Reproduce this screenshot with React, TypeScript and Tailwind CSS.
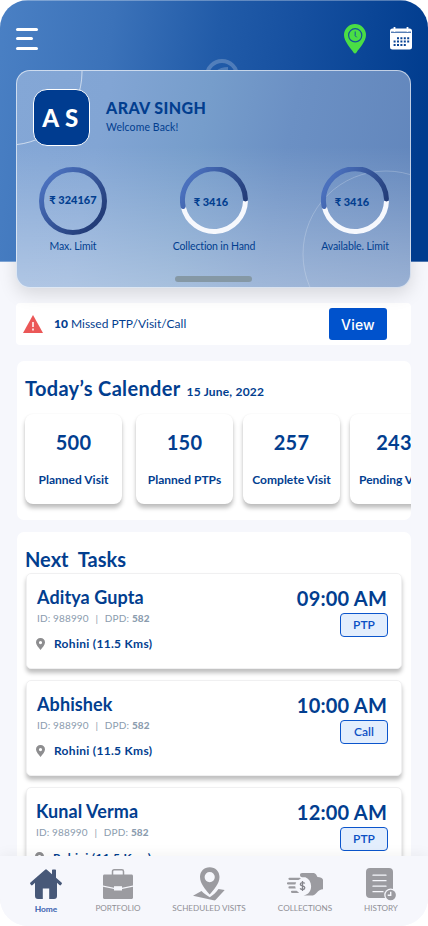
import { ReactElement } from "react";

interface RingProps {
  id: string;
  label: string;
  amount: string;
  full?: boolean;
  amountClass?: string;
  labelClass?: string;
}

interface Stat {
  value: string;
  label: string;
  className: string;
}

interface Task {
  name: string;
  nameClass: string;
  time: string;
  type: string;
}

const stats: Stat[] = [
  { value: "500", label: "Planned Visit", className: "mr-[14px]" },
  { value: "150", label: "Planned PTPs", className: "mr-[10px]" },
  { value: "257", label: "Complete Visit", className: "mr-[10px]" },
  { value: "243", label: "Pending Visit", className: "pr-[9px]" },
];

const tasks: Task[] = [
  { name: "Aditya Gupta", nameClass: "pl-[10px]", time: "09:00 AM", type: "PTP" },
  { name: "Abhishek", nameClass: "pl-[10px]", time: "10:00 AM", type: "Call" },
  { name: "Kunal Verma", nameClass: "pl-[9px]", time: "12:00 AM", type: "PTP" },
];

const Ring = ({ id, label, amount, full, amountClass, labelClass }: RingProps) => (
  <div className="flex w-[100px] flex-col items-center">
    <div className="relative h-[68px] w-[68px]">
      <svg viewBox="0 0 68 68" className="h-full w-full" fill="none">
        <defs>
          <linearGradient id={id} x1="12" y1="10" x2="58" y2="52" gradientUnits="userSpaceOnUse">
            <stop stopColor="#4a70bd" />
            <stop offset="1" stopColor="#233d79" />
          </linearGradient>
          <linearGradient id={`${id}-half`} x1="18" y1="0" x2="66" y2="30" gradientUnits="userSpaceOnUse">
            <stop stopColor="#4a70bd" />
            <stop offset="1" stopColor="#233d79" />
          </linearGradient>
        </defs>
        {full ? (
          <circle cx="34" cy="34" r="31.5" stroke={`url(#${id})`} strokeWidth="5" />
        ) : (
          <>
            <path d="M65.500 34A31.500 31.500 0 0 1 3.300 40" stroke="#f6f8fd" strokeWidth="5" />
            <path
              d="M3.100 39.500A31.500 31.500 0 1 1 65.450 32"
              stroke={`url(#${id}-half)`}
              strokeWidth="5"
              strokeLinecap="round"
            />
          </>
        )}
      </svg>
      <span
        className={`absolute inset-0 flex items-center justify-center whitespace-nowrap text-[11px] font-black ${amountClass}`}
      >
        {amount}
      </span>
    </div>
    <p className={`mt-[4px] whitespace-nowrap text-[10.5px] leading-[14px] ${labelClass}`}>{label}</p>
  </div>
);

const ClockPin = () => (
  <svg width="22" height="30" viewBox="0 0 22 30">
    <path d="M11 0a11 11 0 0 1 11 11c0 6.500-7 13.500-9.500 17.500-.9 1.300-2.100 1.300-3 0C7 24.500 0 17.500 0 11A11 11 0 0 1 11 0Z" fill="#4ade45" />
    <circle cx="11.200" cy="11.300" r="6.600" fill="none" stroke="#12549b" strokeWidth="1.200" />
    <path d="M11.200 7.500v4.200l1.500 1.600" fill="none" stroke="#12549b" strokeWidth="1" />
  </svg>
);

const CalendarIcon = () => (
  <svg width="22" height="23" viewBox="0 0 22 23">
    <path
      d="M2.500 1.500h17A2.500 2.500 0 0 1 22 4v16a2.500 2.500 0 0 1-2.500 2.500h-17A2.500 2.500 0 0 1 0 20V4a2.500 2.500 0 0 1 2.500-2.500Z"
      fill="#fff"
    />
    <path d="M1 5.200h20" stroke="#0b4494" strokeWidth="1" />
    <path d="M4.500 0v4M17.500 0v4" stroke="#fff" strokeWidth="1.800" strokeLinecap="round" />
    <g stroke="#0b4494" strokeWidth="2" strokeDasharray="2 1.400">
      <path d="M7 11.200h12.200M3.600 14.500h15.600M3.600 17.900h12.200" />
    </g>
  </svg>
);

const HomeIcon = () => (
  <svg width="32" height="30" viewBox="0 0 32 30" fill="#475878">
    <path d="M15.100.7a1.400 1.400 0 0 1 1.800 0L22 5.200V1.300c0-.5.300-.8.800-.8h2.400c.5 0 .8.300.8.800v7.400l5.500 4.800c.6.500.6 1 .2 1.500l-.8 1c-.4.500-.9.500-1.500 0L27 13.700V27a3 3 0 0 1-3 3h-4.800V19.500h-6.400V30H8a3 3 0 0 1-3-3V13.700L2.600 16c-.6.500-1.100.5-1.500 0l-.8-1c-.4-.5-.4-1 .2-1.500Z" />
  </svg>
);

const PortfolioIcon = () => (
  <svg width="30" height="30" viewBox="0 0 30 30" fill="#9b9ba0">
    <path d="M9.500 6V2.500c0-1 .6-1.700 1.600-1.700h7.800c1 0 1.600.7 1.600 1.700V6" fill="none" stroke="#9b9ba0" strokeWidth="1.500" />
    <path d="M1.500 5.500h27c.9 0 1.500.6 1.500 1.500v9.500l-11 2.300v-1.600h-8v1.600L0 16.500V7c0-.9.600-1.500 1.500-1.500Z" />
    <path d="M0 17.700 11 20v1.500h8V20l11-2.300v10.800c0 .9-.6 1.500-1.500 1.500h-27C.6 30 0 29.400 0 28.500Z" />
    <path d="M11.500 17.700h7v3.300h-7Z" fill="#f6f7fc" />
  </svg>
);

const VisitsIcon = () => (
  <svg width="32" height="34" viewBox="0 0 32 34" fill="#9b9ba0">
    <path d="M8.500 24 0 28.700l20.500 4.600c1 .2 1.600 0 2.200-.5L31.700 23l-6.200-1c-2.500 3.600-5.500 6.200-8.700 8.200-3.300-1.900-6-3.900-8.300-6.200Z" />
    <path d="M16.700.3c5.700 0 9.800 4.200 9.800 9.600 0 7.100-5.900 12.600-9.800 17.600C12.800 22.500 7 17 7 9.900 7 4.500 11 .3 16.700.3Zm0 4.700a5.100 5.100 0 1 0 0 10.200 5.100 5.100 0 0 0 0-10.200Z" fillRule="evenodd" />
  </svg>
);

const CollectionsIcon = () => (
  <svg width="36" height="23" viewBox="0 0 36 23" fill="#9b9ba0">
    <path d="M15 0h10.500c1.500 0 2.600.4 3.600 1.500L30.500 4c3 0 4.800 1 5.500 2.700v9.500c-2.500.3-4.500 1.300-6.300 3.500-1.700 2-3.200 2.800-5.700 2.800h-7.500c5-.7 7.600-4.600 7.600-9.200 0-4.200-2-7.500-5.700-9.100H15a2 2 0 0 1 0-4.200Z" />
    <path d="M2.500 5.800h10M1 10.300h7.500M2.500 14.400h6.500M5 18.800h6" fill="none" stroke="#9b9ba0" strokeWidth="2.200" strokeLinecap="round" />
    <circle cx="15.500" cy="13" r="7.300" fill="#f6f7fc" />
    <path d="M17.700 10.500c-.7-1.300-4.400-1.300-4.400.7 0 2.200 4.500 1.300 4.500 3.600 0 2.100-3.700 2.200-4.700.6M15.500 8v10" fill="none" stroke="#85858c" strokeWidth="1.300" />
  </svg>
);

const HistoryIcon = () => (
  <svg width="31" height="33" viewBox="0 0 31 33">
    <path d="M4 0h19a4 4 0 0 1 4 4v23a3 3 0 0 1-3 3H4a4 4 0 0 1-4-4V4a4 4 0 0 1 4-4Z" fill="#9b9ba0" />
    <path d="M7 7.200h13M7 12.700h13M7 18.200h13M7 23.700h10" stroke="#f6f7fc" strokeWidth="1.300" strokeLinecap="round" />
    <circle cx="24.700" cy="27" r="6.500" fill="#f6f7fc" />
    <circle cx="24.700" cy="27" r="5.200" fill="#9b9ba0" />
    <path d="M24.700 23.800v3.400h-3" fill="none" stroke="#f6f7fc" strokeWidth="1.400" />
  </svg>
);

const TaskCard = ({ name, nameClass, time, type }: Task) => (
  <div
    className={`flex h-[96px] shrink-0 justify-between rounded-[5px] border border-[#f0f0f1] bg-white pr-[13px] shadow-[0_4px_4px_rgba(0,0,0,0.25)] ${nameClass}`}
  >
    <div className="pt-[12px]">
      <h3 className="text-[18px] font-bold leading-[22px] tracking-[0.1px]">{name}</h3>
      <p className="mt-[3px] text-[10px] leading-[14px] tracking-[0.150px] text-[#8b9cae]">
        ID: 988990 <span className="mx-[4px]">|</span> DPD: <b className="font-black">582</b>
      </p>
      <div className="mt-[11px] flex items-center">
        <svg width="9" height="12" viewBox="0 0 9 12" className="-ml-px mr-[9px]">
          <path d="M4.500 0A4.400 4.400 0 0 1 9 4.500C9 7 6.500 9.300 4.500 12 2.500 9.300 0 7 0 4.500A4.400 4.400 0 0 1 4.500 0Zm0 3a1.600 1.600 0 1 0 0 3.200 1.600 1.600 0 0 0 0-3.200Z" fill="#8e8e90" fillRule="evenodd" />
        </svg>
        <p className="text-[12px] font-bold leading-[15px] tracking-[0.3px]">Rohini (11.5 Kms)</p>
      </div>
    </div>
    <div className="flex flex-col items-end pt-[12px]">
      <p className="pr-px text-[20px] font-bold leading-[24px] tracking-[0.2px]">{time}</p>
      <span className="mt-[3px] flex h-[24px] w-[48px] items-center justify-center rounded-[4px] border border-[#0b55cc] bg-[#e3eefd] text-[12px] font-semibold text-[#0b50c4]">
        {type}
      </span>
    </div>
  </div>
);

interface NavItemProps {
  label: string;
  icon: ReactElement;
  className: string;
  labelClass?: string;
}

const NavItem = ({ label, icon, className, labelClass = "text-[8.150px] text-[#8f8f95]" }: NavItemProps) => (
  <button className={`flex h-full flex-col items-center ${className}`}>
    <span className="flex h-[34px] items-center">{icon}</span>
    <span className={`mt-px whitespace-nowrap leading-[12px] ${labelClass}`}>{label}</span>
  </button>
);

const App = () => {
  return (
    <main className="h-[926px] w-[428px] bg-white font-['Lato','Liberation_Sans',sans-serif] text-[#023e8f] [font-variant-ligatures:none]">
      <div className="relative flex h-full flex-col overflow-hidden rounded-[28px] bg-[#f6f7fc]">
        {/* Header with the profile card hanging over its bottom edge */}
        <header className="relative h-[262px] shrink-0 border-y border-white/30 bg-[linear-gradient(98deg,#4a80c4_0%,#3b72b9_25%,#215ba8_48%,#1650a0_65%,#003c8e_95%)] bg-origin-border px-4 pt-[22px]">
          <div className="flex h-[31px] items-center justify-between">
            <button className="flex flex-col gap-[6.500px]">
              <span className="h-[3px] w-[22px] rounded-full bg-white" />
              <span className="h-[3px] w-[17px] rounded-full bg-white" />
              <span className="h-[3px] w-[22px] rounded-full bg-white" />
            </button>
            <div className="flex items-center gap-6">
              <ClockPin />
              <CalendarIcon />
            </div>
          </div>
          <svg width="36" height="36" viewBox="0 0 36 36" className="absolute left-[204px] top-[57px]" fill="none">
            <circle cx="18" cy="18" r="15" stroke="#fff" strokeOpacity=".22" strokeWidth="4" />
            <path d="M13 14c3-2.500 6-3.500 11-3.500" stroke="#fff" strokeOpacity=".2" strokeWidth="3" />
          </svg>

          <section className="relative mt-[16px] h-[218px] w-[395px] overflow-hidden rounded-[14px] border border-white/60 bg-[linear-gradient(180deg,rgba(255,255,255,0)_35%,rgba(255,255,255,0.36)_100%),linear-gradient(102deg,#84a7d6_0%,#82a5d4_22%,#769dcb_45%,#6b90c4_65%,#6185bb_100%)] bg-origin-border">
            <svg width="395" height="218" viewBox="16 70 395 218" className="absolute -left-px -top-px" fill="none">
              <circle cx="9" cy="72" r="73" stroke="#fff" strokeOpacity=".6" />
              <circle cx="386" cy="254" r="83" stroke="#fff" strokeOpacity=".22" />
            </svg>
            <div className="relative flex pl-[16px] pt-[18px]">
              <div className="flex h-[57px] w-[57px] items-center justify-center rounded-[14px] border border-white bg-[#003c90] pr-[2px] text-[24px] font-black tracking-[0.5px] text-white">
                A S
              </div>
              <div className="ml-[16px] pt-[8px]">
                <h1 className="text-[16px] font-black leading-[22px] tracking-[0.4px]">ARAV SINGH</h1>
                <p className="mt-px text-[10.500px] leading-[15px] tracking-[0.1px]">Welcome Back!</p>
              </div>
            </div>
            <div className="relative mt-[21px] flex justify-between pl-[6px] pr-[5px]">
              <Ring id="max" label="Max. Limit" amount="₹ 324167" full amountClass="pb-px" labelClass="tracking-[-0.1px]" />
              <Ring id="hand" label="Collection in Hand" amount="₹ 3416" amountClass="pt-[3px] pr-[6px]" labelClass="tracking-[-0.150px]" />
              <Ring id="available" label="Available. Limit" amount="₹ 3416" amountClass="pt-[3px] pr-[6px]" labelClass="tracking-[-0.1px]" />
            </div>
            <div className="relative mx-auto mt-[23px] h-[6px] w-[77px] rounded-full bg-[#8598a5]" />
          </section>
        </header>
        <div className="absolute left-4 top-[70px] h-[218px] w-[395px] rounded-[14px] shadow-[0_6px_18px_rgba(0,0,0,0.13)] [clip-path:inset(192px_-30px_-40px_-30px)]" />

        {/* Missed visits alert */}
        <section className="ml-4 mt-[41px] flex h-[42px] w-[395px] shrink-0 items-center rounded-[4px] bg-white pl-[7px] pr-6">
          <svg width="20" height="18" viewBox="0 0 20 18">
            <path d="M10 0 20 18H0Z" fill="#eb5757" />
            <path d="M10 7v5M10 13.500v2" stroke="#fff" strokeWidth="1.500" />
          </svg>
          <p className="ml-[11px] text-[12px]">
            <b className="font-black">10</b> Missed PTP/Visit/Call
          </p>
          <button className="ml-auto h-[32px] w-[58px] rounded-[3px] bg-[#0052cc] font-['Inter',sans-serif] text-[14px] font-medium tracking-[0.2px] text-white">
            View
          </button>
        </section>

        {/* Calendar */}
        <section className="ml-[17px] mt-4 h-[159px] w-[394px] shrink-0 overflow-hidden rounded-[7px] bg-white pl-2 pt-[15px]">
          <div className="flex items-baseline">
            <h2 className="text-[20px] font-bold leading-[24px] tracking-[0.330px]">Today’s Calender</h2>
            <p className="ml-[6px] text-[12px] font-bold tracking-[0.2px]">15 June, 2022</p>
          </div>
          <div className="mt-[13px] flex">
            {stats.map((stat) => (
              <div
                key={stat.label}
                className={`flex h-[90px] w-[97px] shrink-0 flex-col items-center rounded-[8px] bg-white pt-[16px] shadow-[0_4px_4px_rgba(0,0,0,0.25),0_0_2px_rgba(0,0,0,0.06)] ${stat.className}`}
              >
                <p className="text-[20px] font-bold leading-[24px] tracking-[0.3px]">{stat.value}</p>
                <p className="mt-[18px] whitespace-nowrap text-[12px] font-bold leading-[15px]">{stat.label}</p>
              </div>
            ))}
          </div>
        </section>

        {/* Tasks */}
        <section className="ml-[17px] mt-3 h-[324px] w-[394px] shrink-0 overflow-hidden rounded-t-[7px] bg-white pl-[9px] pr-[9px] pt-[15px]">
          <h2 className="-ml-px text-[20px] font-bold leading-[24px] [word-spacing:5px]">Next Tasks</h2>
          <div className="mt-[2px] flex flex-col gap-[11px]">
            {tasks.map((task) => (
              <TaskCard key={task.name} {...task} />
            ))}
          </div>
        </section>

        {/* Bottom navigation */}
        <nav className="relative flex h-[70px] shrink-0 bg-[#f6f7fc] pl-6 pt-[11px] shadow-[0_-2px_12px_rgba(0,0,0,0.05)]">
          <NavItem label="Home" icon={<HomeIcon />} className="w-[44px]" labelClass="text-[8.400px] font-bold text-[#3a62b0] pt-px" />
          <NavItem label="PORTFOLIO" icon={<PortfolioIcon />} className="ml-6 w-[52px]" />
          <NavItem label="SCHEDULED VISITS" icon={<VisitsIcon />} className="ml-[25px] w-[80px]" />
          <NavItem label="COLLECTIONS" icon={<CollectionsIcon />} className="ml-[26px] w-[60px]" />
          <NavItem label="HISTORY" icon={<HistoryIcon />} className="ml-[26px] w-[40px]" />
        </nav>
      </div>
    </main>
  );
};

export default App;
